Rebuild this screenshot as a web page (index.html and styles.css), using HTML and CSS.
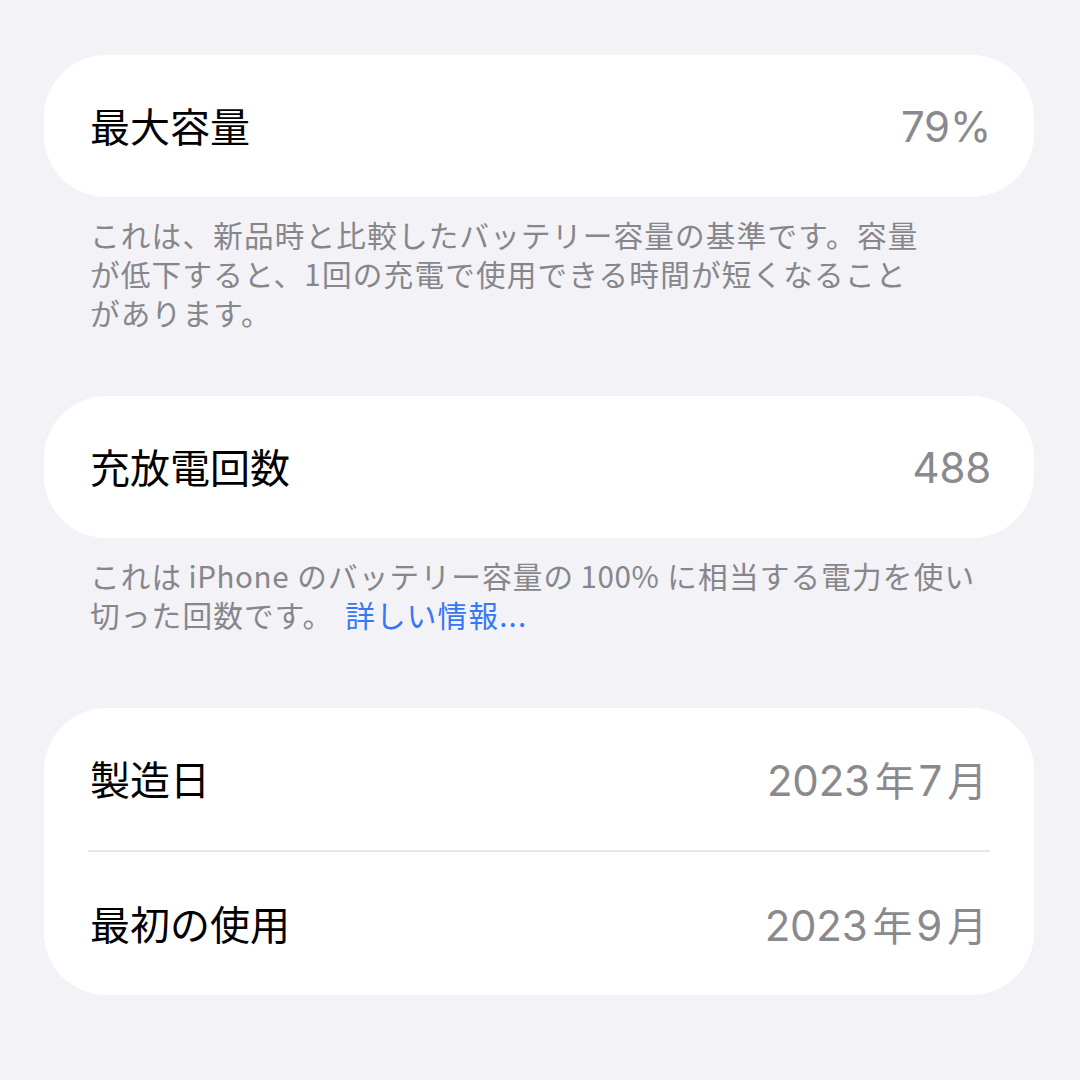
FILE: index.html
```html
<!DOCTYPE html>
<html lang="ja">
<head>
<meta charset="utf-8">
<link rel="stylesheet" href="styles.css">
</head>
<body>
<main class="page">
  <section class="group">
    <div class="card">
      <div class="row">
        <span class="label">最大容量</span>
        <span class="value">79%</span>
      </div>
    </div>
    <p class="caption">これは、新品時と比較したバッテリー容量の基準です。容量<br>が低下すると、1回の充電で使用できる時間が短くなること<br>があります。</p>
  </section>

  <section class="group">
    <div class="card">
      <div class="row">
        <span class="label">充放電回数</span>
        <span class="value">488</span>
      </div>
    </div>
    <p class="caption">これは<span class="latin">iPhone</span>のバッテリー容量の<span class="latin">100%</span>に相当する電力を使い<br>切った回数です。 <a class="link" href="#">詳しい情報...</a></p>
  </section>

  <section class="group group-last">
    <div class="card">
      <div class="row">
        <span class="label">製造日</span>
        <span class="value">2023<span class="cjk">年</span>7<span class="cjk">月</span></span>
      </div>
      <div class="divider"></div>
      <div class="row">
        <span class="label">最初の使用</span>
        <span class="value">2023<span class="cjk">年</span>9<span class="cjk">月</span></span>
      </div>
    </div>
  </section>
</main>
</body>
</html>
```

FILE: styles.css
```css
html, body {
  margin: 0;
  padding: 0;
  background: #f2f2f7;
}

body {
  width: 1080px;
  height: 1080px;
  overflow: hidden;
  font-family: "Noto Sans CJK JP", "Noto Sans", sans-serif;
  -webkit-font-smoothing: antialiased;
}

.page {
  display: flex;
  flex-direction: column;
  padding: 55px 46px 0 44px;
}

.group {
  display: flex;
  flex-direction: column;
}

.group + .group {
  margin-top: 64px;
}

.group + .group-last {
  margin-top: 74px;
}

.card {
  background: #ffffff;
  border-radius: 62px;
  display: flex;
  flex-direction: column;
}

.row {
  height: 142px;
  display: flex;
  align-items: center;
  justify-content: space-between;
  padding: 0 43px 0 46px;
}

.row + .divider + .row {
  height: 143px;
}

.label {
  font-size: 40px;
  color: #000000;
  position: relative;
  top: -1px;
}

.value {
  font-family: Inter, "Noto Sans CJK JP", sans-serif;
  font-size: 42px;
  color: #8a8a8e;
  letter-spacing: -0.2px;
}

.value .cjk {
  font-family: "Noto Sans CJK JP", sans-serif;
  font-size: 40px;
  margin: 0 4px 0 5px;
}

.divider {
  height: 2px;
  background: #e5e5ea;
  margin: 0 44px;
}

.caption {
  margin: 18px 0 0 46px;
  font-size: 29.6px;
  line-height: 39px;
  letter-spacing: 1.2px;
  color: #86868b;
  white-space: nowrap;
}

.caption .latin {
  margin: 0 8px 0 6px;
  letter-spacing: 0.6px;
}

.link {
  color: #3478f6;
  text-decoration: none;
  margin-left: 4px;
}
```
